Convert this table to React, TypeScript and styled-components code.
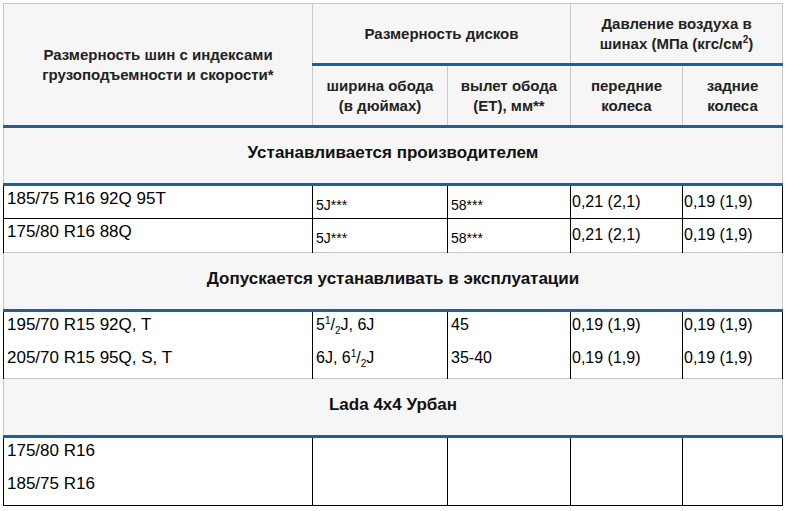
import React from "react";
import styled, { createGlobalStyle } from "styled-components";

const Global = createGlobalStyle`
  html, body { margin: 0; padding: 0; background: #fff; }
  body { font-family: "Liberation Sans", Arial, sans-serif; color: #000; }
`;

const BLUE = "#1f5e98";
const GRAY = "#c9c9c9";

const Wrap = styled.div`
  padding: 3px 0 0 3px;
`;

const Table = styled.table`
  border-collapse: collapse;
  table-layout: fixed;
  width: 779px;
`;

const Col = styled.col<{ $w: number }>`
  width: ${(p) => p.$w}px;
`;

const Tr = styled.tr<{ $h: number }>`
  height: ${(p) => p.$h}px;
`;

const Th = styled.th`
  background: #f6f6f6;
  border: 1px solid ${GRAY};
  border-bottom: 3px solid ${BLUE};
  font-size: 15px;
  font-weight: bold;
  color: #222;
  line-height: 20px;
  text-align: center;
  vertical-align: middle;
  padding: 0 4px;
`;

const Section = styled.th`
  background: #f6f6f6;
  border: 1px solid ${GRAY};
  border-bottom: 3px solid ${BLUE};
  font-size: 17px;
  font-weight: bold;
  color: #111;
  text-align: center;
  vertical-align: middle;
  padding: 0 0 5px;
`;

const Td = styled.td<{ $lined?: boolean; $size: number; $pad: number; $top: number }>`
  border-left: 1px solid #000;
  border-right: 1px solid #000;
  border-bottom: ${(p) => (p.$lined ? "1px solid #000" : "none")};
  font-size: ${(p) => p.$size}px;
  line-height: 18px;
  vertical-align: top;
  padding: ${(p) => `${p.$top}px 2px 0 ${p.$pad}px`};
  white-space: nowrap;
`;

const Sup = styled.sup`
  font-size: 10px;
  line-height: 0;
`;

const Sub = styled.sub`
  font-size: 10px;
  line-height: 0;
`;

type Row = {
  tire: string;
  width?: React.ReactNode;
  et?: string;
  front?: string;
  rear?: string;
  lined?: boolean;
  smallWidth?: boolean;
  h: number;
};

const Half = () => (
  <>
    <Sup>1</Sup>/<Sub>2</Sub>
  </>
);

const groups: { title: string; rows: Row[] }[] = [
  {
    title: "Устанавливается производителем",
    rows: [
      { tire: "185/75 R16 92Q 95T", width: "5J***", et: "58***", front: "0,21 (2,1)", rear: "0,19 (1,9)", lined: true, smallWidth: true, h: 34 },
      { tire: "175/80 R16 88Q", width: "5J***", et: "58***", front: "0,21 (2,1)", rear: "0,19 (1,9)", smallWidth: true, h: 34 },
    ],
  },
  {
    title: "Допускается устанавливать в эксплуатации",
    rows: [
      { tire: "195/70 R15 92Q, T", width: <>5<Half />J, 6J</>, et: "45", front: "0,19 (1,9)", rear: "0,19 (1,9)", h: 34 },
      { tire: "205/70 R15 95Q, S, T", width: <>6J, 6<Half />J</>, et: "35-40", front: "0,19 (1,9)", rear: "0,19 (1,9)", h: 34 },
    ],
  },
  {
    title: "Lada 4x4 Урбан",
    rows: [
      { tire: "175/80 R16", h: 34 },
      { tire: "185/75 R16", lined: true, h: 35 },
    ],
  },
];

export default function App() {
  return (
    <>
      <Global />
      <Wrap>
        <Table>
          <colgroup>
            <Col $w={309} />
            <Col $w={135} />
            <Col $w={123} />
            <Col $w={112} />
            <Col $w={100} />
          </colgroup>
          <thead>
            <Tr $h={61}>
              <Th rowSpan={2}>
                Размерность шин с индексами
                <br />
                грузоподъемности и скорости*
              </Th>
              <Th colSpan={2}>Размерность дисков</Th>
              <Th colSpan={2}>
                Давление воздуха в
                <br />
                шинах (МПа (кгс/см<Sup>2</Sup>)
              </Th>
            </Tr>
            <Tr $h={62}>
              <Th>
                ширина обода
                <br />
                (в дюймах)
              </Th>
              <Th>
                вылет обода
                <br />
                (ЕТ), мм**
              </Th>
              <Th>
                передние
                <br />
                колеса
              </Th>
              <Th>
                задние
                <br />
                колеса
              </Th>
            </Tr>
          </thead>
          {groups.map((g) => (
            <tbody key={g.title}>
              <Tr $h={58}>
                <Section colSpan={5}>{g.title}</Section>
              </Tr>
              {g.rows.map((r) => {
                const top = r.smallWidth ? 7 : 4;
                return (
                  <Tr $h={r.h} key={r.tire}>
                    <Td $size={17} $pad={3} $top={4} $lined={r.lined}>
                      {r.tire}
                    </Td>
                    <Td $size={r.smallWidth ? 14 : 16} $pad={3} $top={r.smallWidth ? 10 : 4} $lined={r.lined}>
                      {r.width}
                    </Td>
                    <Td $size={r.smallWidth ? 14 : 16} $pad={3} $top={r.smallWidth ? 10 : 4} $lined={r.lined}>
                      {r.et}
                    </Td>
                    <Td $size={16} $pad={1} $top={top} $lined={r.lined}>
                      {r.front}
                    </Td>
                    <Td $size={16} $pad={1} $top={top} $lined={r.lined}>
                      {r.rear}
                    </Td>
                  </Tr>
                );
              })}
            </tbody>
          ))}
        </Table>
      </Wrap>
    </>
  );
}
